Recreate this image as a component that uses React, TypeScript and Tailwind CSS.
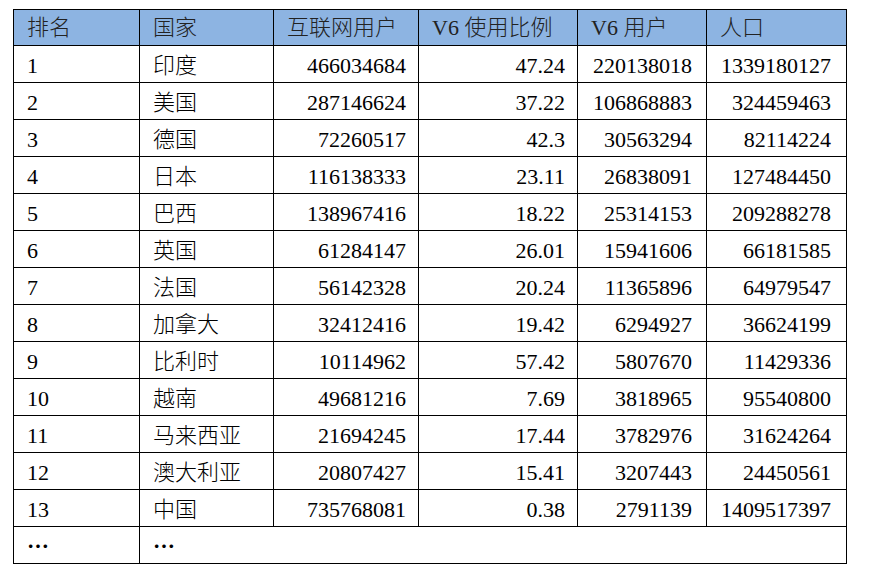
import React from "react";

const rows: [string, string, string, string, string, string][] = [
  ["1", "印度", "466034684", "47.24", "220138018", "1339180127"],
  ["2", "美国", "287146624", "37.22", "106868883", "324459463"],
  ["3", "德国", "72260517", "42.3", "30563294", "82114224"],
  ["4", "日本", "116138333", "23.11", "26838091", "127484450"],
  ["5", "巴西", "138967416", "18.22", "25314153", "209288278"],
  ["6", "英国", "61284147", "26.01", "15941606", "66181585"],
  ["7", "法国", "56142328", "20.24", "11365896", "64979547"],
  ["8", "加拿大", "32412416", "19.42", "6294927", "36624199"],
  ["9", "比利时", "10114962", "57.42", "5807670", "11429336"],
  ["10", "越南", "49681216", "7.69", "3818965", "95540800"],
  ["11", "马来西亚", "21694245", "17.44", "3782976", "31624264"],
  ["12", "澳大利亚", "20807427", "15.41", "3207443", "24450561"],
  ["13", "中国", "735768081", "0.38", "2791139", "1409517397"],
];

const font = { fontFamily: '"Liberation Serif", "Noto Sans CJK SC", serif' };

export default function App() {
  const cell = "border border-black h-[37px] p-0 align-middle leading-none";
  const head = "border border-black h-[36px] p-0 align-middle leading-none font-light text-left pl-[13px]";
  return (
    <div className="w-[881px] h-[578px] bg-white pl-[13px] pt-[9px]" style={font}>
      <table className="border-collapse table-fixed text-[22px] text-black w-[833px]">
        <colgroup>
          <col className="w-[126px]" />
          <col className="w-[134px]" />
          <col className="w-[145px]" />
          <col className="w-[159px]" />
          <col className="w-[129px]" />
          <col className="w-[140px]" />
        </colgroup>
        <thead>
          <tr className="bg-[#8db4e2] text-[#222]">
            <th className={head}>排名</th>
            <th className={head}>国家</th>
            <th className={head}>互联网用户</th>
            <th className={head}>V6 使用比例</th>
            <th className={head}>V6 用户</th>
            <th className={head}>人口</th>
          </tr>
        </thead>
        <tbody>
          {rows.map((r) => (
            <tr key={r[0]}>
              <td className={`${cell} text-left pl-[13px] pt-[3px]`}>{r[0]}</td>
              <td className={`${cell} text-left pl-[13px] pt-[3px] font-light`}>{r[1]}</td>
              <td className={`${cell} text-right pr-[12px] pt-[3px]`}>{r[2]}</td>
              <td className={`${cell} text-right pr-[12px] pt-[3px]`}>{r[3]}</td>
              <td className={`${cell} text-right pr-[14px] pt-[3px]`}>{r[4]}</td>
              <td className={`${cell} text-right pr-[15px] pt-[3px]`}>{r[5]}</td>
            </tr>
          ))}
          <tr>
            <td className={`${cell} text-left pl-[13px]`}>
              <span style={{ fontFamily: '"Noto Sans CJK SC", sans-serif' }} className="font-bold">…</span>
            </td>
            <td colSpan={5} className={`${cell} text-left pl-[13px]`}>
              <span style={{ fontFamily: '"Noto Sans CJK SC", sans-serif' }} className="font-bold">…</span>
            </td>
          </tr>
        </tbody>
      </table>
    </div>
  );
}
